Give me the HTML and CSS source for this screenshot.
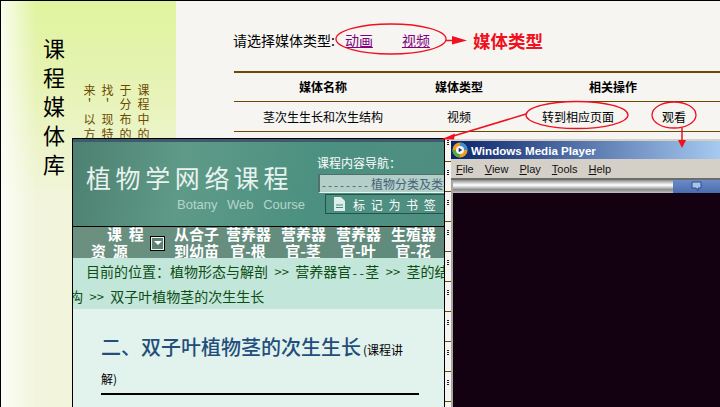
FILE: index.html
```html
<!DOCTYPE html>
<html lang="zh-CN">
<head>
  <meta charset="UTF-8" />
  <title>课程媒体库</title>
  <link rel="stylesheet" href="styles.css">
</head>
<body>
  <div class="page">
    <aside class="sidebar">
      <h1 class="lib-title">课程媒体库</h1>
      <p class="lib-intro">课程中的于分布的找＇现特来＇以方</p>
    </aside>

    <main class="library">
      <div class="type-row">
        <span>请选择媒体类型:</span>
        <a href="#">动画</a>
        <a href="#">视频</a>
        <strong class="type-label">媒体类型</strong>
      </div>
      <table class="media-table">
        <tr>
          <th class="col-name">媒体名称</th>
          <th class="col-type">媒体类型</th>
          <th class="col-ops">相关操作</th>
        </tr>
        <tr>
          <td>茎次生生长和次生结构</td>
          <td>视频</td>
          <td><div class="ops"><span>转到相应页面</span><span>观看</span></div></td>
        </tr>
      </table>
    </main>
  </div>

  <section class="course-win">
    <header class="course-head">
      <div class="brand">
        <div class="brand-cn">植物学网络课程</div>
        <div class="brand-en">Botany Web Course</div>
      </div>
      <div class="course-nav">
        <label>课程内容导航：</label>
        <div class="fake-select"><span class="half-dash">--------</span>植物分类及类群</div>
        <div class="bookmark">
          <svg width="11" height="14" viewBox="0 0 11 14"><path d="M0 0h7l4 4v10H0z" fill="#dfeee8"/><path d="M2 8h7M2 10.500h7" stroke="#4a8a7c"/></svg>
          <span>标 记 为 书 签</span>
        </div>
      </div>
    </header>
    <nav class="menu">
      <div class="menu-first">
        <span class="res-top">课 程</span>
        <span class="res-bottom">资 源</span>
      </div>
      <span class="drop"></span>
      <div class="menu-item wide-first">从合子<br>到幼苗</div>
      <div class="menu-item">营养器<br>官-根</div>
      <div class="menu-item">营养器<br>官-茎</div>
      <div class="menu-item">营养器<br>官-叶</div>
      <div class="menu-item">生殖器<br>官-花</div>
    </nav>
    <div class="crumbs">
      <div class="crumb-one">目前的位置：植物形态与解剖<span class="sep"> &gt;&gt; </span>营养器官<span class="ascii">--</span>茎<span class="sep"> &gt;&gt; </span>茎的结</div>
      <div class="crumb-two">构<span class="sep"> &gt;&gt; </span>双子叶植物茎的次生生长</div>
    </div>
    <article class="lesson">
      <h2>二、双子叶植物茎的次生生长<small>(课程讲<br>解)</small></h2>
      <hr>
    </article>
  </section>

  <section class="player-win">
    <div class="player-title">
      <svg width="16" height="16" viewBox="0 0 18 18">
        <circle cx="9" cy="9" r="8.500" fill="#e8a020"/>
        <path d="M9 .5A8.500 8.500 0 0 1 17.500 9H13A4 4 0 0 0 9 5z" fill="#3f8fd8"/>
        <path d="M.5 9A8.500 8.500 0 0 0 9 17.500V13A4 4 0 0 1 5 9z" fill="#58a83c"/>
        <circle cx="9" cy="9" r="4.500" fill="#f4f4f4"/>
        <path d="M7.500 6.500l4 2.500-4 2.500z" fill="#1c2c6c"/>
      </svg>
      <span>Windows Media Player</span>
    </div>
    <div class="player-menu">
      <span><u>F</u>ile</span>
      <span><u>V</u>iew</span>
      <span><u>P</u>lay</span>
      <span><u>T</u>ools</span>
      <span><u>H</u>elp</span>
    </div>
    <div class="player-seek">
      <div class="seek-bar"></div>
      <div class="seek-right">
        <svg width="11" height="11" viewBox="0 0 11 11"><path d="M1 1h9v6H7v3l-2-3H1z" fill="#a8c4ea" stroke="#2c4a88"/></svg>
      </div>
    </div>
    <div class="player-video"></div>
  </section>

  <svg class="marks" width="720" height="407" viewBox="0 0 720 407">
    <g fill="none" stroke="#f01020" stroke-width="1.300">
      <ellipse cx="391" cy="39" rx="55" ry="15"/>
      <ellipse cx="577" cy="115" rx="51" ry="13.500"/>
      <ellipse cx="674" cy="115" rx="22" ry="13"/>
    </g>
    <g fill="#f01020" stroke="#f01020">
      <path d="M446 40.500h10" stroke-width="1.500"/>
      <path d="M452 36l15 4.500-15 4z" stroke="none"/>
      <path d="M526 114L450 137" stroke-width="1.500"/>
      <path d="M441 139.500l14-6-1 6z" stroke="none"/>
      <path d="M682 128v13" stroke-width="1.500"/>
      <path d="M678 140h8l-4 8z" stroke="none"/>
    </g>
  </svg>
</body>
</html>
```

FILE: styles.css
```css
* {
  box-sizing: border-box;
}

html, body {
  margin: 0;
  width: 720px;
  height: 407px;
  overflow: hidden;
}

body {
  position: relative;
  background-color: #f6f5f1;
  font-family: "Noto Sans CJK SC", "Liberation Sans", sans-serif;
  color: #000;
}

.page {
  display: flex;
  height: 407px;
  border-top: 1px solid #000;
  border-left: 1px solid #000;
}

.sidebar {
  flex: 0 0 175px;
  display: flex;
  gap: 14px;
  padding: 37px 0 0 41px;
  background:
    linear-gradient(to right, rgba(255, 255, 255, 0.8) 0, rgba(255, 255, 255, 0) 36px),
    linear-gradient(to bottom, #e0f49e 0, #e6f3b4 80px, #ecf4c8 140px, #f2f5dc 200px);
}

.lib-title {
  margin: 0;
  writing-mode: vertical-rl;
  font-size: 22px;
  font-weight: 400;
  letter-spacing: 7px;
  line-height: 24px;
  height: 150px;
}

.lib-intro {
  margin: 46px 0 0 0;
  writing-mode: vertical-rl;
  height: 60px;
  font-size: 12px;
  line-height: 18px;
  letter-spacing: 2.700px;
  color: #6b4a00;
}

.library {
  flex: 1;
  min-width: 0;
  padding: 0 0 0 58px;
}

.type-row {
  display: flex;
  align-items: center;
  height: 30px;
  margin-top: 24px;
  margin-left: -1px;
  font-size: 14px;
  white-space: nowrap;
}

.type-row a {
  color: #800080;
  margin-left: 10px;
  margin-right: 19px;
}

.type-label {
  margin-left: 24px;
  font-size: 17.500px;
  color: #f01020;
}

.media-table {
  width: 486px;
  margin-top: 16px;
  border-collapse: separate;
  border-spacing: 0;
  table-layout: fixed;
  font-size: 12px;
}

.media-table th, .media-table td {
  padding: 0;
  height: 30px;
  text-align: center;
  border-bottom: 1px solid #6b4a00;
}

.media-table th {
  height: 31px;
  padding-bottom: 2px;
  border-top: 2px solid #6b4a00;
}

.col-name {
  width: 178px;
}

.col-type {
  width: 94px;
}

.ops {
  display: flex;
  gap: 48px;
  padding-left: 36px;
}

.course-win {
  position: absolute;
  left: 72px;
  top: 138px;
  width: 373px;
  height: 269px;
  display: flex;
  flex-direction: column;
  overflow: hidden;
  border-top: 1px solid #000;
  border-left: 1px solid #000;
  border-right: 1px solid #000;
  background-color: #e2f3ee;
}

.course-head {
  display: flex;
  flex: 0 0 87px;
  border-top: 3px solid #3f5a6c;
  background: linear-gradient(100deg, #4d8070 0, #5f9a88 30%, #4b9080 65%, #4f8e80 100%);
}

.brand {
  flex: 0 0 244px;
  padding: 20px 0 0 13px;
  color: #e8f2ee;
}

.brand-cn {
  font-size: 25px;
  line-height: 30px;
  letter-spacing: 4.600px;
  font-weight: 400;
  white-space: nowrap;
}

.brand-en {
  margin: 5px 0 0 91px;
  font-family: "Liberation Sans", sans-serif;
  font-size: 13px;
  line-height: 15px;
  word-spacing: 6px;
  color: #b4d6ca;
  white-space: nowrap;
}

.course-nav {
  padding-top: 13px;
  font-size: 12px;
  color: #fff;
  white-space: nowrap;
}

.course-nav label {
  display: block;
  margin-bottom: 3px;
  line-height: 16px;
}

.fake-select {
  width: 140px;
  height: 19px;
  margin-left: 1px;
  padding-left: 1px;
  line-height: 17px;
  color: #466478;
  background-color: #b4cec8;
  border-top: 1px solid #50706c;
  border-left: 2px solid #50706c;
  border-bottom: 1px solid #e8f4f0;
  overflow: hidden;
}

.half-dash {
  margin-right: 2px;
  font-family: "Liberation Mono", monospace;
  font-size: 10px;
  line-height: 1;
}

.bookmark {
  display: flex;
  align-items: center;
  gap: 8px;
  width: 130px;
  height: 20px;
  margin: 1px 0 0 8px;
  padding-left: 8px;
  letter-spacing: 1.500px;
  border: 1px solid #20544c;
}

.menu {
  display: flex;
  gap: 11px;
  flex: 0 0 32px;
  min-height: 0;
  border-top: 1px solid #000;
  background: linear-gradient(to right, #6b9080, #5f8a7c);
  color: #fff;
  font-size: 15px;
  font-weight: 700;
  line-height: 17px;
  white-space: nowrap;
}

.menu-first {
  display: flex;
  flex-direction: column;
  flex: 0 0 66px;
  min-width: 0;
  margin-top: -2px;
  padding-left: 18px;
  letter-spacing: 1.700px;
}

.res-top {
  margin-left: 16px;
}

.drop {
  position: relative;
  flex: 0 0 15px;
  height: 15px;
  margin: 9px -2px 0 0;
  background-color: #5d8272;
  border: 1px solid #000;
  outline: 1px solid #e8f2ee;
  outline-offset: -2px;
}

.drop::after {
  content: "";
  position: absolute;
  left: 3px;
  top: 4px;
  border: 4px solid transparent;
  border-top: 4px solid #fff;
}

.menu-item {
  flex: 0 0 44px;
  min-width: 0;
  margin-top: -2px;
  text-align: center;
}

.wide-first {
  margin-right: -3px;
}

.crumbs {
  flex: 0 0 51px;
  min-height: 0;
  padding-top: 1px;
  background-color: #c2e6da;
  color: #0e4d14;
  font-size: 14px;
  line-height: 25px;
  white-space: nowrap;
}

.sep {
  font-size: 13px;
  line-height: 1;
  word-spacing: 3.500px;
}

.ascii {
  font-family: "Liberation Mono", monospace;
  font-size: 11.700px;
  line-height: 1;
}

.crumb-one {
  padding-left: 13px;
}

.crumb-two {
  margin-left: -4px;
}

.lesson {
  flex: 1;
  padding: 23px 0 0 28px;
}

.lesson h2 {
  margin: 0;
  font-size: 20px;
  line-height: 29px;
  font-weight: 500;
  color: #234e7a;
}

.lesson small {
  margin-left: 2px;
  font-size: 12px;
  line-height: 1;
  font-weight: 400;
  color: #000;
}

.lesson hr {
  width: 318px;
  margin: 3px 0 0 0;
  border: none;
  border-top: 2px solid #000;
}

.player-win {
  position: absolute;
  left: 445px;
  top: 139px;
  width: 275px;
  height: 268px;
  display: flex;
  flex-direction: column;
  padding-left: 6px;
  background-color: #f6f5f1;
  background-image:
    linear-gradient(to bottom, transparent 22px, #6b4a00 22px, #6b4a00 23px, transparent 23px),
    linear-gradient(to bottom, transparent 1px, #222 1px, #222 2px, transparent 2px, transparent 3px, #222 3px, #222 4px, transparent 4px, transparent 5px, #222 5px, #222 6px, transparent 6px);
  background-size: 6px 30px, 2px 30px;
  background-position: 0 0, 2px 0;
  background-repeat: repeat-y;
}

.player-title {
  display: flex;
  align-items: center;
  gap: 3px;
  flex: 0 0 20px;
  padding-left: 1px;
  border-top: 2px solid #d4d0c8;
  font-family: "Liberation Sans", sans-serif;
  font-size: 11.600px;
  font-weight: 700;
  color: #fff;
  background: linear-gradient(to right, #0a246a, #a6caf0);
}

.player-menu {
  display: flex;
  gap: 11px;
  flex: 0 0 19px;
  padding: 4px 0 0 5px;
  font-family: "Liberation Sans", sans-serif;
  font-size: 11px;
  color: #111;
  background-color: #d4d0c8;
}

.player-seek {
  display: flex;
  flex: 0 0 15px;
  border-top: 2px solid #6c6c6c;
  background-color: #d4d0c8;
}

.seek-bar {
  flex: 0 0 222px;
  border-left: 2px solid #a8a6a0;
  background: linear-gradient(to bottom, #8c8c8c, #e8e8e8 30%, #fff 40%, #8a8a8a 75%, #c4c4c4 100%);
}

.seek-right {
  flex: 1;
  text-align: center;
  line-height: 10px;
  background: linear-gradient(to bottom, #6a8cc8, #4a6cb0);
}

.player-video {
  flex: 1;
  border-left: 2px solid #a8a6a0;
  background-color: #130010;
}

.marks {
  position: absolute;
  left: 0;
  top: 0;
  pointer-events: none;
}
```
